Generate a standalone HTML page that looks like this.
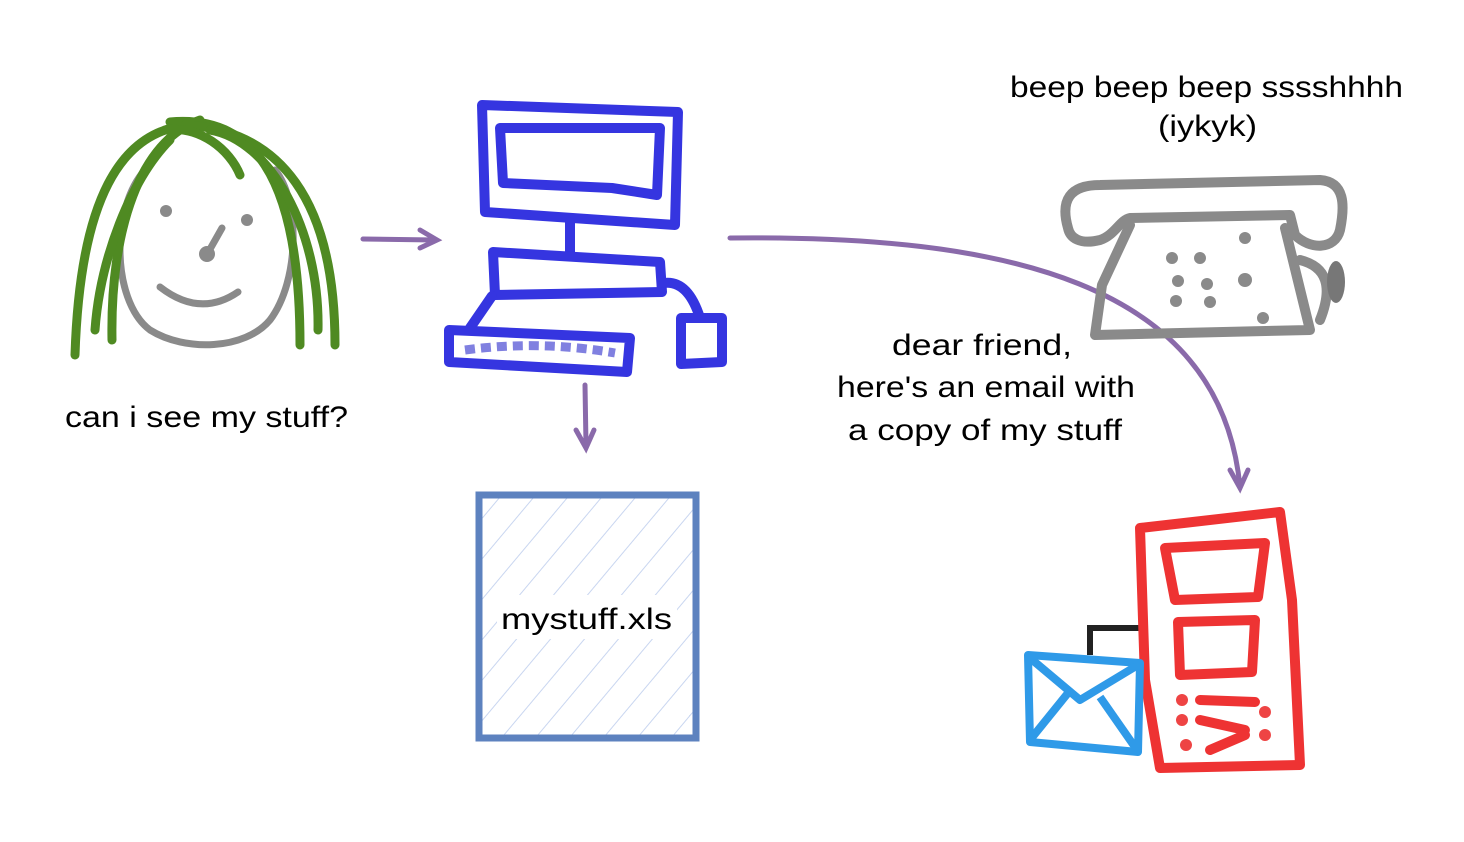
<!DOCTYPE html>
<html><head><meta charset="utf-8"><style>
html,body{margin:0;padding:0;background:#fff;}
svg{display:block}
text{font-family:"Liberation Sans",sans-serif;font-size:30px;fill:#000}
</style></head><body>
<svg width="1464" height="842" viewBox="0 0 1464 842" xmlns="http://www.w3.org/2000/svg">
<defs>
<pattern id="h" width="26" height="26" patternUnits="userSpaceOnUse" patternTransform="rotate(40)">
<line x1="0" y1="0" x2="0" y2="26" stroke="#c9d6f0" stroke-width="2"/>
</pattern>
</defs>
<!-- face -->
<g fill="none" stroke="#8a8a8a" stroke-width="7" stroke-linecap="round">
<path d="M150 165 C110 200 110 300 150 330 C185 352 245 350 270 320 C300 280 300 200 275 170"/>
<path d="M222 228 L205 258"/>
<path d="M160 287 Q200 318 238 292"/>
</g>
<circle cx="166" cy="211" r="6" fill="#8a8a8a"/>
<circle cx="247" cy="220" r="6" fill="#8a8a8a"/>
<circle cx="207" cy="254" r="8" fill="#8a8a8a"/>
<g fill="none" stroke="#4f8a22" stroke-width="9" stroke-linecap="round">
<path d="M190 125 C120 130 80 200 75 355"/>
<path d="M200 120 C140 140 110 230 112 340"/>
<path d="M170 140 C130 180 100 260 95 330"/>
<path d="M170 122 C250 115 300 170 300 345"/>
<path d="M185 125 C280 130 335 200 335 345"/>
<path d="M210 130 C270 140 320 230 318 330"/>
<path d="M165 130 C200 125 230 150 240 175"/>
</g>
<!-- computer -->
<g fill="none" stroke="#3535e0" stroke-width="10" stroke-linejoin="round" stroke-linecap="round">
<path d="M482 105 L678 112 L675 225 L485 212 Z"/>
<path d="M500 128 L660 128 L657 195 L612 188 L503 183 Z"/>
<path d="M570 222 L570 252"/>
<path d="M493 252 L660 262 L662 292 L495 295 Z"/>
<path d="M492 296 L470 328"/>
<path d="M449 330 L630 338 L627 372 L449 362 Z"/>
<path d="M664 283 Q688 280 700 318"/>
<path d="M681 318 L722 318 L722 362 L681 364 Z"/>
</g>
<path d="M465 350 Q540 340 615 353" stroke="#8080e0" stroke-width="9" fill="none" stroke-dasharray="10 6"/>
<!-- arrows -->
<g fill="none" stroke="#8a6aaa" stroke-width="5" stroke-linecap="round">
<path d="M363 239 L435 240"/>
<path d="M420 230 L437 240 L420 248"/>
<path d="M585 385 L586 445"/>
<path d="M576 430 L586 448 L594 430"/>
<path d="M730 238 C1000 235 1220 280 1240 487"/>
<path d="M1230 470 L1240 488 L1248 470"/>
</g>
<!-- file -->
<rect x="479" y="495" width="217" height="243" fill="url(#h)" stroke="#5d82bf" stroke-width="7"/>
<rect x="497" y="595" width="180" height="44" fill="#fff"/>
<text x="501" y="629" textLength="171" lengthAdjust="spacingAndGlyphs">mystuff.xls</text>
<!-- old phone -->
<g fill="none" stroke="#8a8a8a" stroke-width="10" stroke-linejoin="round" stroke-linecap="round">
<path d="M1068 228 C1060 200 1070 185 1100 185 L1320 180 C1345 182 1345 205 1340 230 C1335 250 1310 250 1295 235 L1290 215 L1130 218 C1120 220 1115 235 1100 240 C1080 245 1070 238 1068 228 Z"/>
<path d="M1130 225 L1102 285 L1095 335 L1310 330 L1285 228"/>
<path d="M1300 260 Q1340 270 1320 320"/>
</g>
<ellipse cx="1336" cy="282" rx="9" ry="21" fill="#777"/>
<g fill="#8a8a8a">
<circle cx="1172" cy="258" r="6"/><circle cx="1200" cy="258" r="6"/><circle cx="1245" cy="238" r="6"/>
<circle cx="1178" cy="281" r="6"/><circle cx="1207" cy="284" r="6"/><circle cx="1245" cy="280" r="7"/>
<circle cx="1176" cy="301" r="6"/><circle cx="1210" cy="302" r="6"/><circle cx="1263" cy="318" r="6"/>
</g>
<!-- mobile -->
<path d="M1090 655 L1090 628 L1140 628" stroke="#222" stroke-width="6" fill="none"/>
<g fill="none" stroke="#ee3333" stroke-width="10" stroke-linejoin="round" stroke-linecap="round">
<path d="M1140 528 L1280 512 L1292 600 L1300 765 L1160 768 L1145 680 Z"/>
<path d="M1165 548 L1265 543 L1258 597 L1175 600 Z"/>
<path d="M1178 622 L1255 620 L1252 672 L1180 675 Z"/>
<path d="M1200 700 L1255 702"/><path d="M1200 720 L1245 730"/><path d="M1210 750 L1245 735"/>
</g>
<g fill="#ee4444"><circle cx="1182" cy="700" r="6"/><circle cx="1182" cy="720" r="6"/><circle cx="1186" cy="745" r="6"/><circle cx="1265" cy="712" r="6"/><circle cx="1265" cy="735" r="6"/></g>
<g fill="none" stroke="#2f9ae8" stroke-width="8" stroke-linejoin="round">
<path d="M1028 655 L1140 663 L1138 752 L1030 742 Z"/>
<path d="M1030 658 L1080 700 L1138 665"/>
<path d="M1030 740 L1068 693"/><path d="M1137 750 L1100 697"/>
</g>
<!-- texts -->
<text x="1010" y="97" textLength="393" lengthAdjust="spacingAndGlyphs">beep beep beep sssshhhh</text>
<text x="1158" y="136" textLength="99" lengthAdjust="spacingAndGlyphs">(iykyk)</text>
<text x="65" y="427" textLength="283" lengthAdjust="spacingAndGlyphs">can i see my stuff?</text>
<text x="892" y="355" textLength="180" lengthAdjust="spacingAndGlyphs">dear friend,</text>
<text x="837" y="397" textLength="298" lengthAdjust="spacingAndGlyphs">here's an email with</text>
<text x="848" y="440" textLength="274" lengthAdjust="spacingAndGlyphs">a copy of my stuff</text>
</svg>
</body></html>
